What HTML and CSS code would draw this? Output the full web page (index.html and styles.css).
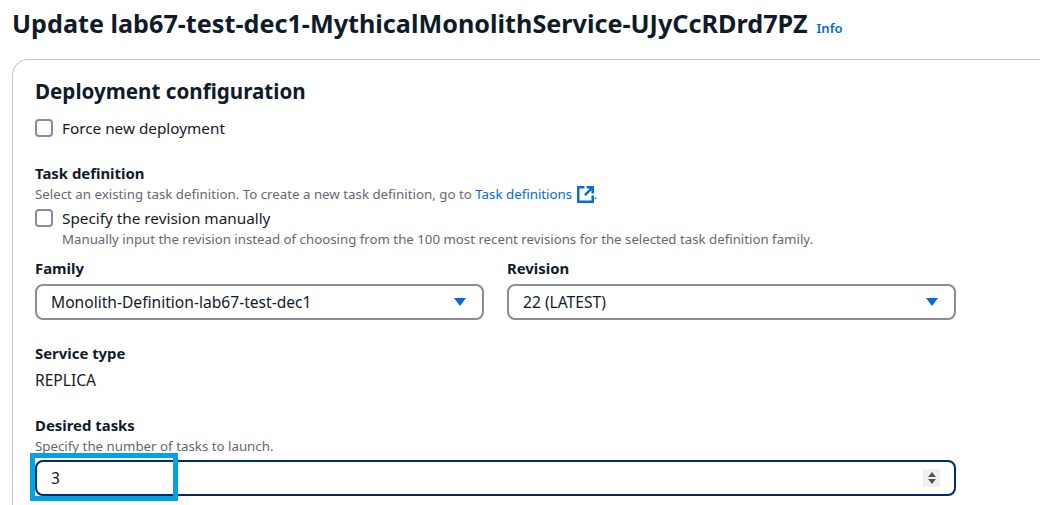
FILE: index.html
```html
<!DOCTYPE html>
<html lang="en">
<head>
<meta charset="utf-8">
<title>Update service</title>
<link rel="stylesheet" href="styles.css">
</head>
<body>
<header class="page-head">
  <h1 class="page-title">Update lab67-test-dec1-MythicalMonolithService-UJyCcRDrd7PZ</h1>
  <a class="info" href="#">Info</a>
</header>
<section class="card">
  <h2 class="card-title">Deployment configuration</h2>
  <label class="check check-force"><span class="box"></span><span class="check-label">Force new deployment</span></label>

  <div class="label label-task">Task definition</div>
  <p class="hint hint-task">Select an existing task definition. To create a new task definition, go to <a class="link" href="#">Task definitions</a>
    <svg class="ext" viewBox="0 0 16 16" width="17" height="17" aria-hidden="true"><path d="M7 1.2H1.2v13.6h13.6V9" fill="none" stroke="#006ce0" stroke-width="2.3"/><path d="M9 1.2h5.8V7M14.8 1.2 7.5 8.5" fill="none" stroke="#006ce0" stroke-width="2.3"/></svg>.</p>
  <label class="check check-manual"><span class="box"></span><span class="check-label">Specify the revision manually</span></label>
  <p class="hint hint-indent">Manually input the revision instead of choosing from the 100 most recent revisions for the selected task definition family.</p>

  <div class="selects">
    <div class="field field-family">
      <div class="label">Family</div>
      <div class="select"><span>Monolith-Definition-lab67-test-dec1</span><span class="caret"></span></div>
    </div>
    <div class="field field-revision">
      <div class="label">Revision</div>
      <div class="select"><span>22 (LATEST)</span><span class="caret"></span></div>
    </div>
  </div>

  <div class="label label-service">Service type</div>
  <div class="value">REPLICA</div>

  <div class="label label-desired">Desired tasks</div>
  <p class="hint hint-desired">Specify the number of tasks to launch.</p>
  <div class="number">
    <span>3</span>
    <span class="spinner"><i class="up"></i><i class="down"></i></span>
    <span class="highlight"></span>
  </div>
</section>
</body>
</html>
```
FILE: styles.css
```css
* { box-sizing: border-box; }
html, body { margin: 0; padding: 0; }
body {
  width: 1040px;
  height: 505px;
  overflow: hidden;
  background: #fff;
  color: #16191f;
  font-family: "Noto Sans", "Open Sans", sans-serif;
  font-size: 15.6px;
}
p, h1, h2 { margin: 0; }
.page-head {
  display: flex;
  align-items: baseline;
  gap: 9px;
  padding: 7px 0 0 12px;
  height: 59px;
}
.page-title {
  font-size: 25.2px;
  line-height: 32px;
  font-weight: 700;
  color: #0f1b2a;
  white-space: nowrap;
}
.info { font-size: 13px; font-weight: 600; color: #006ce0; text-decoration: none; }
.card {
  width: 1028px;
  height: 446px;
  margin-left: 12px;
  padding: 17px 22px 0;
  border: 1px solid #c6c6cd;
  border-right: none;
  border-bottom: none;
  border-radius: 16px 0 0 0;
}
.card-title {
  font-size: 20.6px;
  line-height: 28px;
  font-weight: 700;
  color: #0f1b2a;
}
.check { display: flex; align-items: center; gap: 9px; line-height: 20px; font-size: 15.3px; }
.check-force { margin-top: 13px; }
.check-manual { margin-top: 4px; }
.box {
  width: 18px;
  height: 18px;
  border: 2px solid #8c8c94;
  border-radius: 4px;
  flex: none;
}
.label { font-weight: 700; font-size: 14.9px; line-height: 20px; color: #0f1b2a; }
.label-task { margin-top: 25px; }
.hint { font-size: 13.3px; line-height: 20px; color: #656871; white-space: nowrap; }
.hint-task { margin-top: 1px; }
.hint-indent { margin-left: 27px; margin-top: 1px; font-size: 13.25px; }
.hint-desired { margin-top: 1px; }
.link { color: #006ce0; text-decoration: none; }
.ext { vertical-align: -4px; margin-left: 1px; }
.selects { display: flex; gap: 23px; margin-top: 9px; }
.field-family { width: 449px; }
.field-revision { width: 449px; }
.select {
  display: flex;
  justify-content: space-between;
  align-items: center;
  height: 36px;
  margin-top: 6px;
  padding: 0 16px 0 14px;
  border: 2px solid #8c8c94;
  border-radius: 8px;
  color: #0f1b2a;
}
.caret {
  width: 0;
  height: 0;
  border-left: 6.5px solid transparent;
  border-right: 6.5px solid transparent;
  border-top: 8px solid #006ce0;
}
.label-service { margin-top: 23px; }
.value { margin-top: 7px; line-height: 20px; }
.label-desired { margin-top: 25px; }
.number {
  position: relative;
  display: flex;
  justify-content: space-between;
  align-items: center;
  width: 921px;
  height: 36px;
  margin-top: 4px;
  padding: 0 14px;
  border: 2px solid #002b66;
  border-radius: 8px;
}
.spinner {
  display: flex;
  flex-direction: column;
  justify-content: center;
  gap: 2px;
  width: 17px;
  height: 18px;
  background: #f0f0f0;
  align-items: center;
}
.spinner i { width: 0; height: 0; border-left: 4px solid transparent; border-right: 4px solid transparent; }
.spinner .up { border-bottom: 5px solid #555; }
.spinner .down { border-top: 5px solid #555; }
.highlight {
  position: absolute;
  left: -7px;
  top: -9px;
  width: 148px;
  height: 48px;
  border: 5px solid #00a4e6;
}
```
